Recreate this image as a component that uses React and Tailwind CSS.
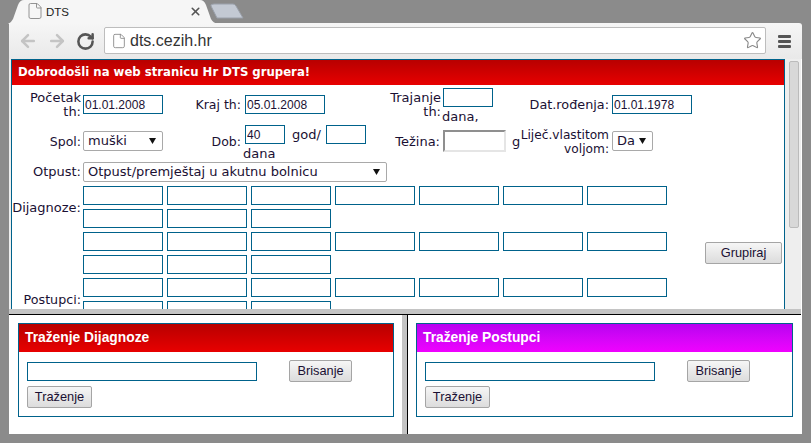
import { ArrowLeft, ArrowRight, RotateCw, File, Star, X } from "lucide-react";

const verdana = "font-['DejaVu_Sans',sans-serif]";
const arial = "font-['Liberation_Sans',sans-serif]";

function Label({ w, mt = "mt-0", size = "text-[13px]", children }) {
  return (
    <div className={`${w} ${mt} ${size} shrink-0 text-right leading-[14px] whitespace-nowrap text-[#1a1033] ${verdana}`}>
      {children}
    </div>
  );
}

function Box({ w = "w-20", value = "" }) {
  return (
    <input
      readOnly
      value={value}
      className={`${w} block h-[19px] shrink-0 border border-[#00628b] bg-white px-[1px] text-[12px] text-[#1a1033] outline-none ${arial}`}
    />
  );
}

function Picker({ w, text }) {
  return (
    <div className={`${w} flex h-[20px] shrink-0 items-center justify-between rounded-[2px] border border-[#a9a9a9] bg-white pr-[6px] pl-[4px] text-[13px] text-[#1a1033] ${verdana}`}>
      <span>{text}</span>
      <svg width="7" height="6" viewBox="0 0 7 6"><path d="M0 0h7L3.5 6z" fill="#111" /></svg>
    </div>
  );
}

function Btn({ w, children }) {
  return (
    <button
      type="button"
      className={`${w} block h-[22px] shrink-0 rounded-[2px] border border-[#a5a5a5] bg-gradient-to-b from-[#f6f6f6] to-[#dcdcdc] text-[12.8px] leading-none text-[#1a1033] ${arial}`}
    >
      {children}
    </button>
  );
}

function BoxRow({ count }) {
  return (
    <div className="flex gap-[4px]">
      {Array.from({ length: count }).map((_, i) => (
        <Box key={i} />
      ))}
    </div>
  );
}

function SearchPanel({ title, grad }) {
  return (
    <div className="h-[94px] border border-[#00628b]">
      <div className={`${grad} flex h-[28px] items-center px-[6px] text-[13.8px] font-bold text-white ${arial}`}>
        {title}
      </div>
      <div className="flex pt-[8px] pl-[8px]">
        <div className="w-[262px]">
          <div className="mt-[2px]"><Box w="w-[230px]" /></div>
          <div className="mt-[5px]"><Btn w="w-[65px]">Traženje</Btn></div>
        </div>
        <Btn w="w-[63px]">Brisanje</Btn>
      </div>
    </div>
  );
}

export default function App() {
  return (
    <div className="h-[443px] w-[811px] overflow-hidden bg-[#8b8b8b] px-[9px]">
      <div className="relative h-[23px]">
        <svg className="absolute top-0 left-[-9px]" width="260" height="24" viewBox="0 0 260 24">
          <path d="M214 4h19q2 0 3 2l7 12h-26l-6-12q-1-2 3-2z" fill="#c3c9d3" stroke="#9aa0aa" />
          <path d="M8 24q3-1 5-5l5-14q2-5 6-5h176q4 0 6 5l5 14q2 4 7 5z" fill="#f6f6f6" />
        </svg>
        <File className="absolute top-[2px] left-[17px] text-[#888]" size={18} strokeWidth={1.2} />
        <span className={`absolute top-[4px] left-[37px] text-[11.5px] text-[#222] ${arial}`}>DTS</span>
        <X className="absolute top-[5px] left-[180px] text-[#555]" size={13} strokeWidth={3} />
      </div>

      <div className="flex h-[36px] items-center rounded-tr-[3px] bg-gradient-to-b from-[#f6f6f6] to-[#e9e9e9]">
        <ArrowLeft className="ml-[9px] text-[#c4c4c4]" size={20} strokeWidth={3} />
        <ArrowRight className="ml-[9px] text-[#c4c4c4]" size={20} strokeWidth={3} />
        <RotateCw className="ml-[9px] text-[#555]" size={19} strokeWidth={3.2} />
        <div className="mt-[-1px] ml-[9px] flex h-[27px] w-[662px] items-center rounded-[2px] border border-[#bdbdbd] bg-white pr-[3px] pl-[6px]">
          <File className="text-[#888]" size={16} strokeWidth={1.3} />
          <span className={`ml-[3px] flex-1 text-[16px] text-[#333] ${arial}`}>dts.cezih.hr</span>
          <Star className="text-[#888]" size={19} strokeWidth={1.4} />
        </div>
        <div className="ml-[12px] flex w-[13px] flex-col gap-[2px]">
          <div className="h-[3px] rounded-[1px] bg-[#555]" />
          <div className="h-[3px] rounded-[1px] bg-[#555]" />
          <div className="h-[3px] rounded-[1px] bg-[#555]" />
        </div>
      </div>

      <div className="h-[375px] bg-white pr-[1px]">
        <div className="flex h-[250px] bg-[#eee]">
          <div className="ml-[2px] w-[774px] overflow-hidden border-x border-t border-[#00628b] bg-white">
            <div className={`flex h-[25px] items-center bg-gradient-to-b from-[#b80000] to-[#e80000] pl-[6px] text-[11.7px] font-bold text-white ${verdana}`}>
              Dobrodošli na web stranicu Hr DTS grupera!
            </div>

            {/* row 1 */}
            <div className="flex h-[40px] items-start pt-[3px]">
              <Label w="w-[69px]" mt="mt-[3px]">Početak<br />th:</Label>
              <div className="mt-[7px] ml-[2px]"><Box value="01.01.2008" /></div>
              <Label w="w-[78px]" mt="mt-[10px]" size="text-[12.5px]">Kraj th:</Label>
              <div className="mt-[7px] ml-[4px]"><Box value="05.01.2008" /></div>
              <Label w="w-[116px]" mt="mt-[3px]">Trajanje<br />th:</Label>
              <div className="ml-[2px] w-[50px] shrink-0">
                <Box w="w-[50px]" />
                <div className={`mt-[3px] ml-[-1px] text-[13px] leading-[14px] text-[#1a1033] ${verdana}`}>dana,</div>
              </div>
              <Label w="w-[116px]" mt="mt-[10px]" size="text-[12.8px]">Dat.rođenja:</Label>
              <div className="mt-[7px] ml-[3px]"><Box value="01.01.1978" /></div>
            </div>

            {/* row 2 */}
            <div className="flex h-[37px] items-start">
              <Label w="w-[69px]" mt="mt-[10px]" size="text-[12.5px]">Spol:</Label>
              <div className="mt-[6px] ml-[2px]"><Picker w="w-20" text="muški" /></div>
              <Label w="w-[78px]" mt="mt-[10px]" size="text-[12.5px]">Dob:</Label>
              <div className="w-[85px] shrink-0">
                <div className="flex items-start">
                  <div className="ml-[4px]"><Box w="w-10" value="40" /></div>
                  <div className={`mt-[3px] ml-[7px] text-[13px] leading-[14px] text-[#1a1033] ${verdana}`}>god/</div>
                </div>
                <div className={`mt-[3px] ml-[2px] text-[13px] leading-[14px] text-[#1a1033] ${verdana}`}>dana</div>
              </div>
              <Box w="w-10" />
              <Label w="w-[74px]" mt="mt-[10px]">Težina:</Label>
              <div className="mt-[5px] ml-[3px] h-[22px] w-[63px] shrink-0 border-2 border-t-[#8f8f8f] border-r-[#e5e5e5] border-b-[#e5e5e5] border-l-[#8f8f8f] bg-white" />
              <div className={`mt-[10px] ml-[6px] w-[8px] shrink-0 text-[13px] leading-[14px] text-[#1a1033] ${verdana}`}>g</div>
              <Label w="w-[89px]" mt="mt-[3px]" size="text-[12.2px]">Liječ.vlastitom<br />voljom:</Label>
              <div className="mt-[6px] ml-[3px]"><Picker w="w-[41px]" text="Da" /></div>
            </div>

            {/* row 3 */}
            <div className="flex h-[24px] items-start">
              <Label w="w-[69px]" mt="mt-[3px]">Otpust:</Label>
              <div className="ml-[2px]"><Picker w="w-[304px]" text="Otpust/premještaj u akutnu bolnicu" /></div>
            </div>

            {/* code rows */}
            <div className="flex items-start">
              <div className="w-[69px] shrink-0">
                <Label w="w-[69px]" mt="mt-[15px]">Dijagnoze:</Label>
                <Label w="w-[69px]" mt="mt-[78px]" size="text-[12.7px]">Postupci:</Label>
              </div>
              <div className="ml-[2px] flex w-[584px] shrink-0 flex-col gap-[4px]">
                <BoxRow count={7} />
                <BoxRow count={3} />
                <BoxRow count={7} />
                <BoxRow count={3} />
                <BoxRow count={7} />
                <BoxRow count={3} />
              </div>
              <div className="mt-[56px] ml-[38px]"><Btn w="w-[77px]">Grupiraj</Btn></div>
            </div>
          </div>
          <div className="flex-1 pt-[2px] pr-[2px] pl-[4px]">
            <div className="h-[167px] rounded-[2px] border border-[#bbb] bg-[#d8d8d8]" />
          </div>
        </div>

        <div className="h-[5px] bg-[#c4c4c4]" />
        <div className="h-[1px] bg-black" />

        <div className="flex h-[119px]">
          <div className="w-[393px] pt-[8px] pr-[8px] pl-[9px]">
            <SearchPanel title="Traženje Dijagnoze" grad="bg-gradient-to-b from-[#b80000] to-[#e80000]" />
          </div>
          <div className="w-[5px] bg-[#c4c4c4]" />
          <div className="w-[1px] bg-black" />
          <div className="flex-1 pt-[8px] pr-[8px] pl-[8px]">
            <SearchPanel title="Traženje Postupci" grad="bg-gradient-to-b from-[#b800f0] to-[#f000ff]" />
          </div>
        </div>
      </div>
    </div>
  );
}
